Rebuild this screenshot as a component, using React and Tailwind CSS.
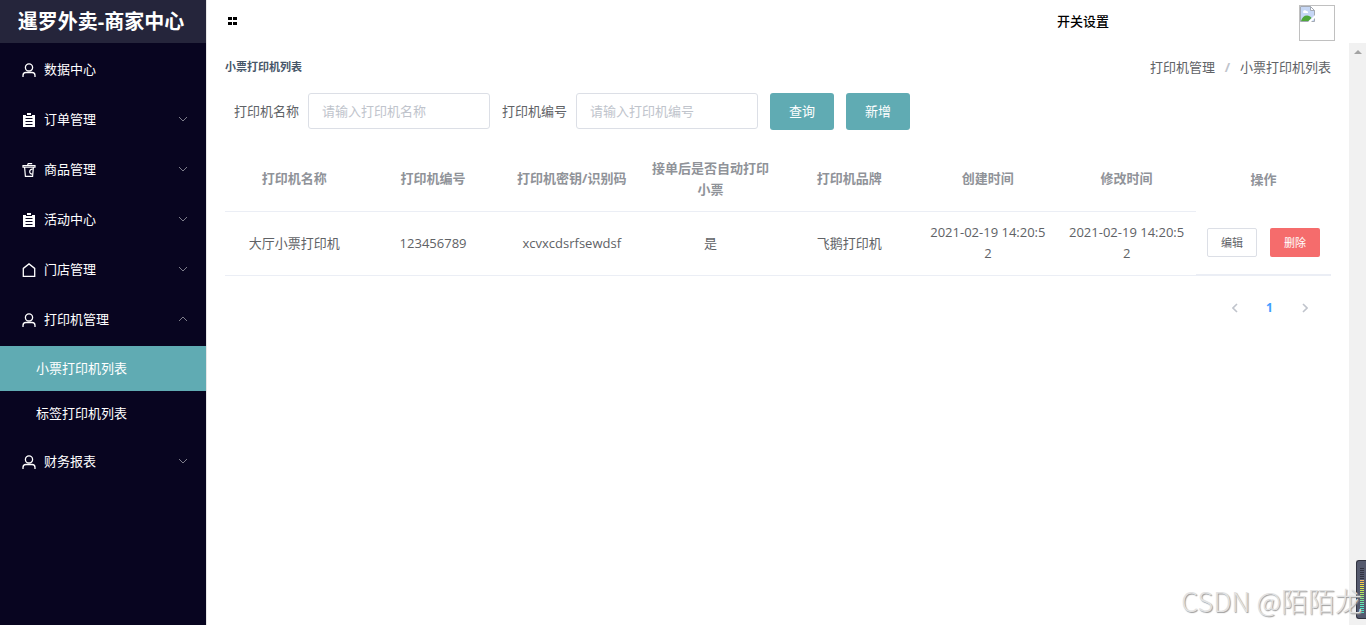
import { useState } from 'react'

const MENU = [
  { key: 'data', label: '数据中心', icon: UserIcon },
  { key: 'order', label: '订单管理', icon: OrderIcon, children: [] },
  { key: 'goods', label: '商品管理', icon: CupIcon, children: [] },
  { key: 'activity', label: '活动中心', icon: OrderIcon, children: [] },
  { key: 'store', label: '门店管理', icon: HouseIcon, children: [] },
  { key: 'printer', label: '打印机管理', icon: UserIcon, children: ['小票打印机列表', '标签打印机列表'] },
  { key: 'finance', label: '财务报表', icon: UserIcon, children: [] },
]

const COLUMNS = ['打印机名称', '打印机编号', '打印机密钥/识别码', '接单后是否自动打印小票', '打印机品牌', '创建时间', '修改时间']

const PRINTERS = [
  {
    name: '大厅小票打印机',
    number: '123456789',
    secret: 'xcvxcdsrfsewdsf',
    auto: '是',
    brand: '飞鹅打印机',
    createdAt: '2021-02-19 14:20:52',
    updatedAt: '2021-02-19 14:20:52',
  },
]

const LEVELS = [
  'bg-[#30323f]', 'bg-[#30323f]', 'bg-[#30323f]', 'bg-[#30323f]', 'bg-[#30323f]', 'bg-[#30323f]',
  'bg-[#f5b860]', 'bg-[#f5c850]', 'bg-[#f0d848]', 'bg-[#e5e048]', 'bg-[#d8e850]', 'bg-[#c8e858]',
  'bg-[#b8e860]', 'bg-[#a8e868]', 'bg-[#98e878]', 'bg-[#88e888]', 'bg-[#78e898]', 'bg-[#6ce8a8]',
  'bg-[#60e8b8]', 'bg-[#58e8c0]', 'bg-[#50e8c8]', 'bg-[#50e8c8]', 'bg-[#50e8c8]',
]

function UserIcon() {
  return (
    <svg viewBox="0 0 14 14" className="mt-0.5 w-3.5 h-3.5" fill="none" stroke="currentColor" strokeWidth="1.3">
      <circle cx="7" cy="4.4" r="3.6" />
      <path d="M1 14v-1.600c0-1.700 1.200-2.900 2.900-2.900h6.200c1.700 0 2.900 1.200 2.900 2.900V14" />
    </svg>
  )
}

function OrderIcon() {
  return (
    <svg viewBox="0 0 14 14" className="mt-0.5 w-3.5 h-3.5" fill="currentColor">
      <path
        fillRule="evenodd"
        d="M1 2h3v1h6V2h3v12H1zM3.500 5v1h7V5zM3.500 8v1h7V8zM3.500 11v1h7v-1z"
      />
      <path d="M5 0h4v2H5z" />
    </svg>
  )
}

function CupIcon() {
  return (
    <svg viewBox="0 0 14 14" className="mt-0.5 w-3.5 h-3.5" fill="none" stroke="currentColor" strokeWidth="1.2">
      <path d="M5.500 2.400L6.200.700h4M1 4.200V2.500h12v1.700zM2.600 4.400l.8 9h7.200l.8-9" />
      <path d="M10.800 6.200c-1.900-.3-3.100.9-3.100 2.500s1.100 2.600 2.800 2.400" />
    </svg>
  )
}

function HouseIcon() {
  return (
    <svg viewBox="0 0 14 14" className="mt-0.5 w-3.5 h-3.5" fill="none" stroke="currentColor" strokeWidth="1.3">
      <path d="M1.300 13.300V5.400L7 .9l5.700 4.500v7.900z" />
    </svg>
  )
}

function ArrowIcon({ open }) {
  return (
    <svg viewBox="0 0 10 6" className="w-2.5 h-1.5" fill="none" stroke="#7d7d8a" strokeWidth="1">
      <path d={open ? 'M1 5l4-4 4 4' : 'M1 1l4 4 4-4'} />
    </svg>
  )
}

function Sidebar() {
  const [opened, setOpened] = useState('printer')
  const [active, setActive] = useState('小票打印机列表')

  return (
    <aside className="w-[206px] shrink-0 bg-[#080520] text-white">
      <h1 className="h-[43px] pr-1 flex items-center justify-center bg-[#25253b] text-xl font-bold">暹罗外卖-商家中心</h1>
      <nav className="pt-px">
        {MENU.map(({ key, label, icon: Icon, children }) => (
          <div key={key}>
            <button
              type="button"
              onClick={() => setOpened(opened === key ? '' : key)}
              className="w-full h-[50px] pl-[22px] pr-[18px] flex items-center gap-2"
            >
              <Icon />
              <span className="flex-1 text-left">{label}</span>
              {children && <ArrowIcon open={opened === key} />}
            </button>
            {opened === key && children?.length > 0 && (
              <div className="mt-0.5">
                {children.map((child) => (
                  <a
                    key={child}
                    href="#"
                    onClick={() => setActive(child)}
                    className={`h-[45px] pl-9 pb-0.5 flex items-center ${active === child ? 'bg-[#60abb3]' : ''}`}
                  >
                    {child}
                  </a>
                ))}
              </div>
            )}
          </div>
        ))}
      </nav>
    </aside>
  )
}

function Header() {
  return (
    <header className="h-[43px] pl-[21px] pr-[31px] pb-0.5 flex items-center text-black">
      <button type="button" aria-label="menu">
        <svg viewBox="0 0 9 8" className="w-[9px] h-2" fill="currentColor">
          <path d="M0 0h4v3H0zM5 0h4v3H5zM0 5h4v3H0zM5 5h4v3H5z" />
        </svg>
      </button>
      <a href="#" className="ml-auto font-medium">开关设置</a>
      <div className="ml-[190px] mt-1 w-9 h-9 border border-[#c0c0c0]">
        <svg viewBox="0 0 16 16" className="w-4 h-4">
          <path d="M.5.5h10l4 4v11H.5z" fill="#c6d7f5" stroke="#a3a9b3" />
          <path d="M10.500.500v4h4z" fill="#fff" stroke="#a3a9b3" />
          <path d="M3 6a2 2 0 0 1 3.500-1A1.500 1.500 0 0 1 8 7H3.500z" fill="#fff" />
          <path d="M1 15c1-3.500 3-5.500 6-5.500 2 0 3.500 1 4.500 2.500L8.500 15z" fill="#4fa83a" />
          <path d="M8 16l8-8v3l-5 5z" fill="#fff" />
        </svg>
      </div>
    </header>
  )
}

function SearchForm() {
  return (
    <form className="mt-3.5 pl-[9px] flex items-start gap-3" onSubmit={(e) => e.preventDefault()}>
      <div className="flex items-center gap-[9px]">
        <label htmlFor="name">打印机名称</label>
        <input
          id="name"
          type="text"
          placeholder="请输入打印机名称"
          className="w-[182px] h-9 px-[13px] border border-[#dcdfe6] rounded-[3px] placeholder:text-[#c0c4cc]"
        />
      </div>
      <div className="flex items-center gap-[9px]">
        <label htmlFor="number">打印机编号</label>
        <input
          id="number"
          type="text"
          placeholder="请输入打印机编号"
          className="w-[182px] h-9 px-[13px] border border-[#dcdfe6] rounded-[3px] placeholder:text-[#c0c4cc]"
        />
      </div>
      <button type="submit" className="w-16 h-[37px] pb-0.5 rounded-[3px] bg-[#60abb3] text-white">查询</button>
      <button type="button" className="w-16 h-[37px] pb-0.5 rounded-[3px] bg-[#60abb3] text-white">新增</button>
    </form>
  )
}

function PrinterTable() {
  return (
    <table className="mt-[17px] w-full table-fixed text-center leading-[21px]">
      <thead className="text-[#909399]">
        <tr className="h-16">
          {COLUMNS.map((title) => (
            <th key={title} className="px-[9px] font-bold border-b border-[#ebeef5]">{title}</th>
          ))}
          <th className="w-[135px] font-bold">操作</th>
        </tr>
      </thead>
      <tbody>
        {PRINTERS.map((row) => (
          <tr key={row.number} className="h-16">
            {Object.values(row).map((value, i) => (
              <td key={i} className="px-[9px] break-all border-b border-[#ebeef5]">{value}</td>
            ))}
            <td className="border-b-2 border-[#ebeef5]">
              <div className="flex justify-center gap-[13px]">
                <button type="button" className="w-[50px] h-[29px] rounded-[2px] border border-[#dcdfe6] text-[11px]">编辑</button>
                <button type="button" className="w-[50px] h-[29px] rounded-[2px] bg-[#f56c6c] text-white text-[11px]">删除</button>
              </div>
            </td>
          </tr>
        ))}
      </tbody>
    </table>
  )
}

function Pagination() {
  return (
    <div className="mt-[18px] pr-[9px] h-7 flex justify-end text-xs font-bold">
      <button type="button" aria-label="prev" className="w-[35px] flex items-center justify-center">
        <svg viewBox="0 0 6 10" className="w-1.5 h-2.5" fill="none" stroke="#c0c4cc" strokeWidth="1.6">
          <path d="M5 1L1 5l4 4" />
        </svg>
      </button>
      <button type="button" className="w-[35px] text-[#409eff]">1</button>
      <button type="button" aria-label="next" className="w-[35px] flex items-center justify-center">
        <svg viewBox="0 0 6 10" className="w-1.5 h-2.5" fill="none" stroke="#c0c4cc" strokeWidth="1.6">
          <path d="M1 1l4 4-4 4" />
        </svg>
      </button>
    </div>
  )
}

export default function App() {
  return (
    <div className="relative min-h-screen flex overflow-hidden bg-white text-[13px] leading-5 text-[#606266] font-['Open_Sans','Noto_Sans_CJK_SC',sans-serif]">
      <Sidebar />
      <div className="flex-1 min-w-0 flex flex-col border-l border-[#e6e6e6]">
        <Header />
        <div className="flex-1 flex">
          <main className="flex-1 min-w-0 px-[18px] pt-3.5">
            <div className="h-[22px] pb-0.5 flex items-center justify-between">
              <h2 className="text-[11px] font-bold text-[#475669]">小票打印机列表</h2>
              <div className="flex">
                <a href="#">打印机管理</a>
                <span className="w-[25px] text-center font-bold text-[#c0c4cc]">/</span>
                <span>小票打印机列表</span>
              </div>
            </div>
            <SearchForm />
            <PrinterTable />
            <Pagination />
          </main>
          <div className="w-[17px] pt-[7px] bg-[#f1f1f1] flex justify-center">
            <svg viewBox="0 0 8 4" className="w-2 h-1" fill="#a3a3a3">
              <path d="M4 0l4 4H0z" />
            </svg>
          </div>
        </div>
      </div>

      {/* level meter docked on the right edge */}
      <div className="absolute right-0 bottom-1.5 w-2.5 h-[59px] pt-[7px] pl-[3px] rounded-l-[3px] border border-r-0 border-[#30323f] bg-[#555a6e] flex flex-col gap-px">
        {LEVELS.map((color, i) => (
          <span key={i} className={`w-1 h-px ${color}`} />
        ))}
      </div>
      <p className="absolute right-1 bottom-1.5 text-[27px] leading-9 font-light text-[#e2e2e2] [text-shadow:1px_1px_1px_#999] font-['Noto_Sans_CJK_SC',sans-serif]">
        CSDN @陌陌龙
      </p>
    </div>
  )
}
